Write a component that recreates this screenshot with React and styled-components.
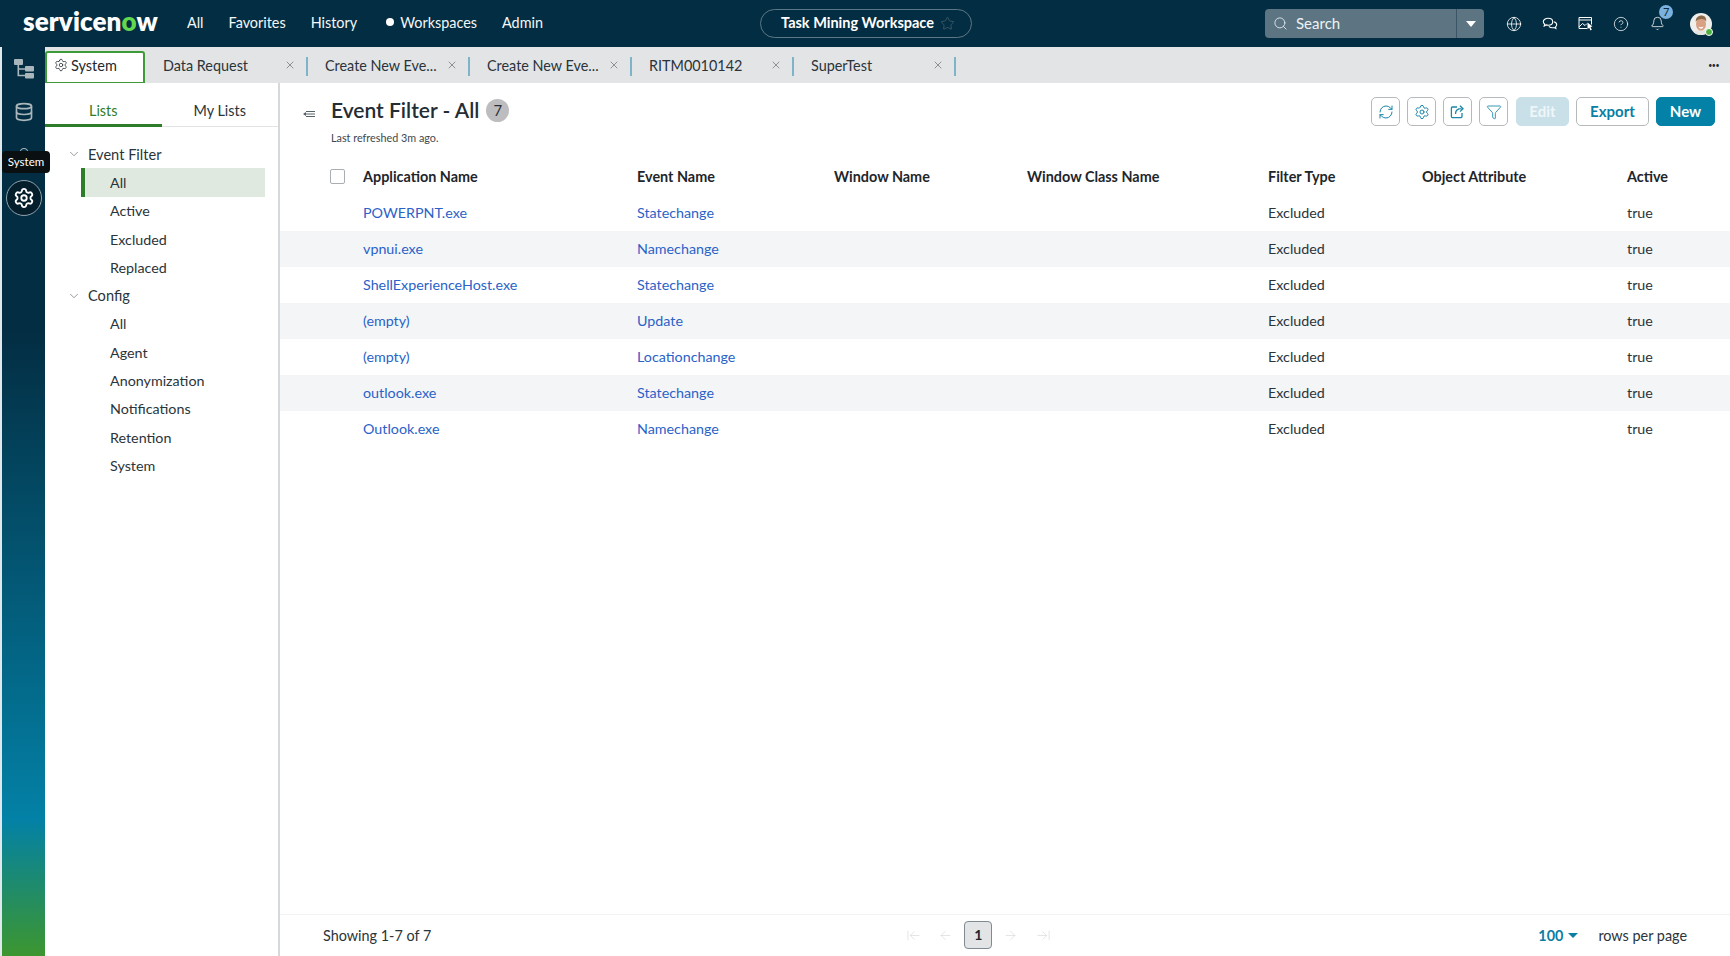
import React from "react";
import styled, { createGlobalStyle } from "styled-components";
import {
  ArrowLeft,
  ArrowLeftToLine,
  ArrowRight,
  ArrowRightToLine,
  Bell,
  ChevronDown,
  CircleHelp,
  Database,
  Filter,
  Globe,
  Lock,
  RefreshCw,
  Search,
  Settings,
  Star,
  X,
} from "lucide-react";

const GlobalStyle = createGlobalStyle`
  html, body {
    margin: 0;
    height: 100%;
    overflow: hidden;
    background: #fff;
    font-family: Lato, "Open Sans", sans-serif;
    color: #20292f;
  }
  * { box-sizing: border-box; }
`;

const COLUMNS = "274px 197px 193px 241px 154px 205px 1fr";

const tabs = [
  { label: "Data Request" },
  { label: "Create New Eve..." },
  { label: "Create New Eve..." },
  { label: "RITM0010142" },
  { label: "SuperTest" },
];

const tree = [
  { title: "Event Filter", items: ["All", "Active", "Excluded", "Replaced"] },
  { title: "Config", items: ["All", "Agent", "Anonymization", "Notifications", "Retention", "System"] },
];

const rows = [
  ["POWERPNT.exe", "Statechange"],
  ["vpnui.exe", "Namechange"],
  ["ShellExperienceHost.exe", "Statechange"],
  ["(empty)", "Update"],
  ["(empty)", "Locationchange"],
  ["outlook.exe", "Statechange"],
  ["Outlook.exe", "Namechange"],
];

const headers = [
  "Application Name",
  "Event Name",
  "Window Name",
  "Window Class Name",
  "Filter Type",
  "Object Attribute",
  "Active",
];

function TreeIcon() {
  return (
    <svg width="20" height="20" viewBox="0 0 20 20" fill="#a9b6bc">
      <rect x="0" y="0" width="9" height="6" rx="1" />
      <rect x="11" y="7" width="9" height="5.5" rx="1" />
      <rect x="11" y="14" width="9" height="5.5" rx="1" />
      <path d="M3.5 6h1.6v3.2H11v1.5H5.1v5.1H11v1.5H3.5z" />
    </svg>
  );
}

function ChatIcon() {
  return (
    <svg width="16" height="16" viewBox="0 0 16 16" fill="none" stroke="#fff" strokeWidth="1.1">
      <path d="M6.2 2.2c-2.7 0-4.9 1.5-4.9 3.5 0 1 .5 1.8 1.4 2.5l-.5 1.7 2-1c.8.2 1.3.3 2 .3 2.7 0 4.5-1.5 4.5-3.5S8.9 2.2 6.2 2.2z" />
      <path d="M11.8 5.8c1.7.4 2.9 1.5 2.9 2.9 0 .9-.5 1.6-1.2 2.2l.4 1.6-1.8-.9c-.6.2-1.1.2-1.6.2-1.6 0-2.9-.6-3.6-1.6" />
    </svg>
  );
}

function ScreenIcon() {
  return (
    <svg width="15" height="15" viewBox="0 0 15 15" fill="none" stroke="#fff" strokeWidth="1">
      <path d="M9 12.5H1v-11h12.5v7" />
      <path d="M1 4h12.5M1 11l3.5-3.5 2.5 2L9 7.5" />
      <path d="M9.5 6.5l5 4-2 .6 1.3 2.6-1.3.7-1.3-2.6-1.7 1.4z" fill="#fff" stroke="none" />
    </svg>
  );
}

function ShareIcon() {
  return (
    <svg width="15" height="15" viewBox="0 0 15 15" fill="none" stroke="#1a86a8" strokeWidth="1.3">
      <path d="M7 3H2.4a1 1 0 0 0-1 1v8.6a1 1 0 0 0 1 1H11a1 1 0 0 0 1-1V9" />
      <path d="M5.5 10c0-3.4 2.2-5.3 6-5.3M10 1.8l3 2.9-3 2.9" />
    </svg>
  );
}

function CollapseIcon() {
  return (
    <svg width="12" height="8" viewBox="0 0 12 8" fill="none" stroke="#56626a" strokeWidth="1">
      <path d="M3 1.5h9M1 4h11M3 6.5h9" />
      <path d="M0 4l3-2v4z" fill="#56626a" stroke="none" />
    </svg>
  );
}

function Avatar() {
  return (
    <AvatarWrap>
      <svg width="22" height="22" viewBox="0 0 22 22">
        <clipPath id="avatar-clip">
          <circle cx="11" cy="11" r="11" />
        </clipPath>
        <g clipPath="url(#avatar-clip)">
          <rect width="22" height="22" fill="#f1efec" />
          <path d="M2 22c1-4 4-5 9-5s8 1 9 5z" fill="#e8e6e2" />
          <ellipse cx="11" cy="11" rx="5" ry="6.6" fill="#d9a184" />
          <path d="M5.8 9c-.4-4 2.4-6.4 5.6-6.4 3 0 5.2 2 4.8 6-.9-1.8-2.2-2.6-4.6-2.6-2.6 0-4.8.8-5.8 3z" fill="#8d6b4a" />
          <path d="M8.5 13.5c1.4 1 3.4 1 5 0-.5 1.6-1.5 2.2-2.5 2.2s-2-.6-2.5-2.2z" fill="#fff" />
        </g>
      </svg>
      <StatusDot />
    </AvatarWrap>
  );
}

export default function App() {
  return (
    <>
      <GlobalStyle />
      <Page>
        <TopBar>
          <LeftGroup>
            <Logo>
              servicen<LogoO>o</LogoO>w
            </Logo>
            <Nav>
              <NavItem>All</NavItem>
              <NavItem>Favorites</NavItem>
              <NavItem>History</NavItem>
              <WorkspacesItem>
                <NavDot />
                Workspaces
              </WorkspacesItem>
              <NavItem>Admin</NavItem>
            </Nav>
          </LeftGroup>
          <WorkspacePill>
            <PillLabel>Task Mining Workspace</PillLabel>
            <Star size={15} color="#41606f" strokeWidth={1.3} />
          </WorkspacePill>
          <RightGroup>
            <SearchBox>
              <SearchField>
                <Search size={15} strokeWidth={1.4} color="#e6ecef" />
                <SearchLabel>Search</SearchLabel>
              </SearchField>
              <SearchCaret />
            </SearchBox>
            <IconSlots>
              <HeaderIcon>
                <Globe size={16} strokeWidth={1.2} />
              </HeaderIcon>
              <HeaderIcon>
                <ChatIcon />
              </HeaderIcon>
              <HeaderIcon>
                <ScreenIcon />
              </HeaderIcon>
              <HeaderIcon>
                <CircleHelp size={16} strokeWidth={1.1} />
              </HeaderIcon>
              <HeaderIcon>
                <Bell size={15} strokeWidth={1.2} />
                <BellBadge>7</BellBadge>
              </HeaderIcon>
            </IconSlots>
            <Avatar />
          </RightGroup>
        </TopBar>

        <Body>
          <Rail>
            <RailSlot>
              <TreeIcon />
            </RailSlot>
            <RailSlot>
              <Database size={20} strokeWidth={2} color="#a9b6bc" />
            </RailSlot>
            <RailSlot>
              <Lock size={18} strokeWidth={1.6} color="#a9b6bc" />
              <RailTooltip>System</RailTooltip>
            </RailSlot>
            <RailSlot>
              <ActiveRailButton>
                <Settings size={22} strokeWidth={2} color="#fff" />
              </ActiveRailButton>
            </RailSlot>
          </Rail>

          <Main>
            <TabStrip>
              <ActiveTab>
                <Settings size={14} strokeWidth={1.3} />
                System
              </ActiveTab>
              {tabs.map((tab, i) => (
                <Tab key={i}>
                  <TabLabel>{tab.label}</TabLabel>
                  <X size={12} strokeWidth={1.2} color="#4f5a61" />
                </Tab>
              ))}
              <TabMore>•••</TabMore>
            </TabStrip>

            <Workspace>
              <Sidebar>
                <SideTabs>
                  <SideTab $active>Lists</SideTab>
                  <SideTab>My Lists</SideTab>
                </SideTabs>
                <TreeList>
                  {tree.map((group) => (
                    <React.Fragment key={group.title}>
                      <GroupRow>
                        <ChevronDown size={14} strokeWidth={1.1} color="#56626a" />
                        {group.title}
                      </GroupRow>
                      {group.items.map((item) => (
                        <TreeItem key={item} $selected={group.title === "Event Filter" && item === "All"}>
                          {item}
                        </TreeItem>
                      ))}
                    </React.Fragment>
                  ))}
                </TreeList>
              </Sidebar>

              <Content>
                <ContentHead>
                  <CollapseSlot>
                    <CollapseIcon />
                  </CollapseSlot>
                  <TitleBlock>
                    <TitleRow>
                      <Title>Event Filter - All</Title>
                      <CountBadge>7</CountBadge>
                    </TitleRow>
                    <Refreshed>Last refreshed 3m ago.</Refreshed>
                  </TitleBlock>
                  <Toolbar>
                    <IconButton>
                      <RefreshCw size={16} strokeWidth={1.5} color="#1a86a8" />
                    </IconButton>
                    <IconButton>
                      <Settings size={16} strokeWidth={1.5} color="#1a86a8" />
                    </IconButton>
                    <IconButton>
                      <ShareIcon />
                    </IconButton>
                    <IconButton>
                      <Filter size={16} strokeWidth={1.3} color="#1a86a8" />
                    </IconButton>
                    <EditButton $variant="disabled" $width={53}>Edit</EditButton>
                    <TextButton $variant="outline" $width={73}>Export</TextButton>
                    <TextButton $variant="primary" $width={59}>New</TextButton>
                  </Toolbar>
                </ContentHead>

                <HeaderRow>
                  <HeaderCheck />
                  {headers.map((h) => (
                    <HeaderCell key={h}>{h}</HeaderCell>
                  ))}
                </HeaderRow>
                {rows.map((row, i) => (
                  <DataRow key={i} $shaded={i % 2 === 1}>
                    <LinkCell>{row[0]}</LinkCell>
                    <LinkCell>{row[1]}</LinkCell>
                    <Cell />
                    <Cell />
                    <Cell>Excluded</Cell>
                    <Cell />
                    <Cell>true</Cell>
                  </DataRow>
                ))}

                <Footer>
                  <Showing>Showing 1-7 of 7</Showing>
                  <Pager>
                    <PagerSlot>
                      <ArrowLeftToLine size={15} strokeWidth={1} />
                    </PagerSlot>
                    <PagerSlot>
                      <ArrowLeft size={15} strokeWidth={1} />
                    </PagerSlot>
                    <PagerSlot>
                      <PageButton>1</PageButton>
                    </PagerSlot>
                    <PagerSlot>
                      <ArrowRight size={15} strokeWidth={1} />
                    </PagerSlot>
                    <PagerSlot>
                      <ArrowRightToLine size={15} strokeWidth={1} />
                    </PagerSlot>
                  </Pager>
                  <PerPage>
                    <PerPageValue>
                      100
                      <PerPageCaret />
                    </PerPageValue>
                    rows per page
                  </PerPage>
                </Footer>
              </Content>
            </Workspace>
          </Main>
        </Body>
      </Page>
    </>
  );
}

const Page = styled.div`
  height: 100vh;
  display: flex;
  flex-direction: column;
  overflow: hidden;
`;

const TopBar = styled.header`
  height: 47px;
  flex: none;
  display: flex;
  align-items: center;
  background: #032d42;
  color: #fff;
  padding-left: 23px;
`;

const LeftGroup = styled.div`
  width: 737px;
  flex: none;
  display: flex;
  align-items: center;
`;

const Logo = styled.div`
  width: 134px;
  font-size: 26px;
  font-weight: 800;
  letter-spacing: 0.1px;
  line-height: 1;
  margin-top: -5px;
  white-space: nowrap;
`;

const LogoO = styled.span`
  color: #62d84e;
`;

const Nav = styled.nav`
  display: flex;
  align-items: center;
  gap: 25px;
  margin-left: 30px;
  margin-top: -3px;
`;

const NavItem = styled.div`
  display: flex;
  align-items: center;
  font-size: 14.4px;
  color: #f4f7f8;
`;

const WorkspacesItem = styled(NavItem)`
  margin-left: 4px;
`;

const NavDot = styled.span`
  width: 8px;
  height: 8px;
  border-radius: 50%;
  background: #fff;
  margin-right: 6px;
`;

const WorkspacePill = styled.div`
  width: 212px;
  height: 29px;
  flex: none;
  display: flex;
  align-items: center;
  justify-content: center;
  gap: 6px;
  padding-left: 4px;
  border: 1px solid #5c7886;
  border-radius: 15px;
  font-size: 14.5px;
  font-weight: 700;
`;

const PillLabel = styled.span`
  margin-top: -3px;
`;

const RightGroup = styled.div`
  margin-left: auto;
  padding-right: 18px;
  display: flex;
  align-items: center;
`;

const SearchBox = styled.div`
  width: 219px;
  height: 29px;
  display: flex;
  background: #5d7583;
  border-radius: 4px;
  overflow: hidden;
`;

const SearchField = styled.div`
  flex: 1;
  display: flex;
  align-items: center;
  gap: 8px;
  padding-left: 8px;
  font-size: 15px;
  color: #eef2f4;
`;

const SearchLabel = styled.span`
  margin-top: -2px;
`;

const SearchCaret = styled.div`
  width: 28px;
  border-left: 1px solid #3b5566;
  position: relative;
  &::after {
    content: "";
    position: absolute;
    left: 9px;
    top: 12px;
    border-left: 5px solid transparent;
    border-right: 5px solid transparent;
    border-top: 6px solid #fff;
  }
`;

const IconSlots = styled.div`
  display: flex;
  margin-left: 12px;
`;

const HeaderIcon = styled.div`
  position: relative;
  width: 35.8px;
  height: 24px;
  display: flex;
  align-items: center;
  justify-content: center;
`;

const BellBadge = styled.span`
  position: absolute;
  left: 20px;
  top: -7px;
  width: 14px;
  height: 14px;
  border-radius: 50%;
  background: #7bb1de;
  color: #0c2a3a;
  font-size: 11px;
  line-height: 14px;
  text-align: center;
`;

const AvatarWrap = styled.div`
  position: relative;
  width: 22px;
  height: 22px;
  margin-left: 15px;
`;

const StatusDot = styled.span`
  position: absolute;
  right: -1px;
  bottom: -1px;
  width: 8px;
  height: 8px;
  border-radius: 50%;
  background: #4caf3f;
  border: 1px solid #fff;
`;

const Body = styled.div`
  flex: 1;
  min-height: 0;
  display: flex;
`;

const Rail = styled.aside`
  width: 45px;
  flex: none;
  border-left: 2px solid #dfe8ec;
  background: linear-gradient(to bottom, #032d42 0%, #032d42 31%, #0381a6 85%, #3c962f 100%);
`;

const RailSlot = styled.div`
  position: relative;
  height: 43.5px;
  display: flex;
  align-items: center;
  justify-content: center;
`;

const RailTooltip = styled.span`
  position: absolute;
  left: 0;
  top: 17px;
  width: 48px;
  height: 22px;
  border-radius: 4px;
  background: #0a0f12;
  color: #fff;
  font-size: 11.5px;
  line-height: 21px;
  text-align: center;
  z-index: 2;
`;

const ActiveRailButton = styled.div`
  width: 36px;
  height: 36px;
  margin-top: -3px;
  border-radius: 50%;
  border: 1px solid #8fa3ad;
  background: #051e2c;
  display: flex;
  align-items: center;
  justify-content: center;
`;

const Main = styled.div`
  flex: 1;
  min-width: 0;
  display: flex;
  flex-direction: column;
`;

const TabStrip = styled.div`
  height: 36px;
  flex: none;
  display: flex;
  align-items: flex-end;
  background: #e3e4e6;
`;

const ActiveTab = styled.div`
  width: 100px;
  height: 32px;
  flex: none;
  display: flex;
  align-items: center;
  gap: 3px;
  padding: 0 0 5px 7px;
  margin-right: 1px;
  background: #fff;
  border: 2px solid #3f9a38;
  border-bottom-width: 1px;
  border-radius: 3px 3px 0 0;
  font-size: 14.5px;
  color: #1f282e;
`;

const Tab = styled.div`
  position: relative;
  width: 162px;
  height: 36px;
  flex: none;
  display: flex;
  align-items: center;
  justify-content: space-between;
  padding: 0 12px 0 17px;
  &::after {
    content: "";
    position: absolute;
    right: 0;
    top: 10px;
    width: 2px;
    height: 19px;
    background: #7fb3c7;
  }
`;

const TabLabel = styled.span`
  font-size: 14.4px;
  color: #2a343a;
  white-space: nowrap;
`;

const TabMore = styled.span`
  margin-left: auto;
  padding-right: 11px;
  align-self: center;
  font-size: 7px;
  letter-spacing: -0.5px;
  color: #20292f;
`;

const Workspace = styled.div`
  flex: 1;
  min-height: 0;
  display: flex;
`;

const Sidebar = styled.nav`
  width: 235px;
  flex: none;
  border-right: 2px solid #d6d9dc;
`;

const SideTabs = styled.div`
  height: 44px;
  display: flex;
  border-bottom: 1px solid #e1e3e5;
`;

const SideTab = styled.div`
  width: 117px;
  padding-top: 18px;
  margin-bottom: -1px;
  font-size: 14.4px;
  line-height: 20px;
  text-align: center;
  color: ${(p) => (p.$active ? "#2f7d2b" : "#2a343a")};
  border-bottom: 3px solid ${(p) => (p.$active ? "#2f7d2b" : "transparent")};
`;

const TreeList = styled.div`
  padding-top: 13px;
`;

const GroupRow = styled.div`
  height: 28.3px;
  display: flex;
  align-items: center;
  gap: 7px;
  padding-left: 22px;
  font-size: 14.6px;
  color: #2a343a;
`;

const TreeItem = styled.div`
  height: 28.3px;
  width: 184px;
  margin-left: 36px;
  display: flex;
  align-items: center;
  padding-left: ${(p) => (p.$selected ? "25px" : "29px")};
  font-size: 14.3px;
  color: #2a343a;
  background: ${(p) => (p.$selected ? "#e0e9df" : "transparent")};
  border-left: ${(p) => (p.$selected ? "4px solid #2f7d2b" : "none")};
`;

const Content = styled.main`
  flex: 1;
  min-width: 0;
  display: flex;
  flex-direction: column;
`;

const ContentHead = styled.div`
  display: flex;
  align-items: flex-start;
  padding: 13px 15px 0 23px;
`;

const CollapseSlot = styled.div`
  width: 28px;
  height: 28px;
  padding-top: 14px;
  line-height: 0;
`;

const TitleBlock = styled.div`
  display: flex;
  flex-direction: column;
`;

const TitleRow = styled.div`
  display: flex;
  align-items: center;
  gap: 7px;
  height: 28px;
`;

const Title = styled.h1`
  margin: -2px 0 0;
  font-size: 21px;
  font-weight: 600;
  color: #232d33;
  white-space: nowrap;
`;

const CountBadge = styled.span`
  width: 23px;
  height: 23px;
  border-radius: 50%;
  background: #bdbdc0;
  font-size: 15px;
  line-height: 22px;
  text-align: center;
  color: #2a2f33;
`;

const Refreshed = styled.div`
  margin-top: 7px;
  font-size: 10.8px;
  line-height: 14px;
  color: #3e484f;
`;

const Toolbar = styled.div`
  margin-left: auto;
  display: flex;
  gap: 7px;
  margin-top: 1px;
`;

const IconButton = styled.button`
  width: 29px;
  height: 29px;
  padding: 0;
  display: flex;
  align-items: center;
  justify-content: center;
  background: #fff;
  border: 1px solid #b6babd;
  border-radius: 5px;
`;

const TextButton = styled.button`
  width: ${(p) => p.$width}px;
  height: 29px;
  padding: 0 0 2px;
  font-family: inherit;
  font-size: 15px;
  font-weight: 700;
  border-radius: 5px;
  ${(p) =>
    p.$variant === "primary"
      ? "background:#0381a6;color:#fff;border:1px solid #0381a6;"
      : p.$variant === "disabled"
        ? "background:#c9e0e8;color:#eef6f9;border:1px solid #c9e0e8;"
        : "background:#fff;color:#0a7ea4;border:1px solid #b6babd;"}
`;

const EditButton = styled(TextButton)`
  margin-left: 1px;
`;

const HeaderRow = styled.div`
  position: relative;
  height: 36px;
  margin-top: 14px;
  display: grid;
  grid-template-columns: ${COLUMNS};
  align-items: center;
  padding: 0 0 1px 83px;
`;

const HeaderCheck = styled.span`
  position: absolute;
  left: 50px;
  top: 10px;
  width: 15px;
  height: 15px;
  border: 1px solid #a9aeb3;
  border-radius: 2px;
  background: #fff;
`;

const HeaderCell = styled.div`
  font-size: 14.4px;
  font-weight: 700;
  color: #1e262b;
  white-space: nowrap;
`;

const DataRow = styled.div`
  height: 36px;
  flex: none;
  display: grid;
  grid-template-columns: ${COLUMNS};
  align-items: center;
  padding: 0 0 2px 83px;
  background: ${(p) => (p.$shaded ? "#f4f5f7" : "#fff")};
`;

const Cell = styled.div`
  font-size: 14.3px;
  color: #2a343a;
`;

const LinkCell = styled(Cell)`
  color: #2a62c8;
`;

const Footer = styled.footer`
  margin-top: auto;
  height: 42px;
  flex: none;
  display: flex;
  align-items: center;
  padding: 0 43px 1px 43px;
  border-top: 1px solid #f1f2f3;
`;

const Showing = styled.div`
  width: 574px;
  flex: none;
  font-size: 14.4px;
  color: #2a343a;
`;

const Pager = styled.div`
  display: flex;
  align-items: center;
  color: #d3d6d9;
`;

const PagerSlot = styled.div`
  width: 32.5px;
  display: flex;
  justify-content: center;
`;

const PageButton = styled.div`
  width: 28px;
  height: 28px;
  border: 1px solid #7f8a92;
  border-radius: 4px;
  background: #e3e4e6;
  color: #1e262b;
  font-size: 14px;
  font-weight: 700;
  line-height: 26px;
  text-align: center;
`;

const PerPage = styled.div`
  margin-left: auto;
  display: flex;
  align-items: center;
  gap: 20px;
  font-size: 14.4px;
  color: #2a343a;
`;

const PerPageValue = styled.span`
  display: flex;
  align-items: center;
  gap: 5px;
  color: #0a7ea4;
  font-weight: 700;
`;

const PerPageCaret = styled.span`
  border-left: 5px solid transparent;
  border-right: 5px solid transparent;
  border-top: 5.5px solid #0a7ea4;
`;
